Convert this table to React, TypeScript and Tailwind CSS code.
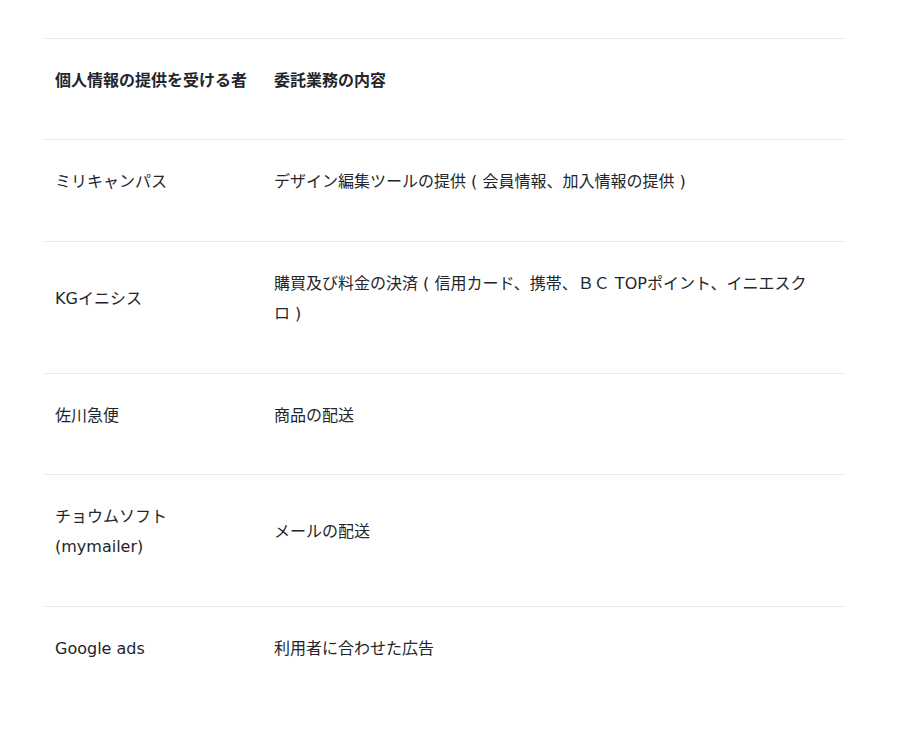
const ROWS: { name: string[]; content: string }[] = [
  { name: ['ミリキャンパス'], content: 'デザイン編集ツールの提供 ( 会員情報、加入情報の提供 )' },
  { name: ['KGイニシス'], content: '購買及び料金の決済 ( 信用カード、携帯、ＢＣ TOPポイント、イニエスクロ )' },
  { name: ['佐川急便'], content: '商品の配送' },
  { name: ['チョウムソフト', '(mymailer)'], content: 'メールの配送' },
  { name: ['Google ads'], content: '利用者に合わせた広告' },
];

export default function App() {
  return (
    <div
      className="min-h-[746px] bg-white pt-[38px] pl-[43px] text-[16px] leading-[1.9] text-[#22262c]"
      style={{ fontFamily: '"DejaVu Sans", "Noto Sans CJK JP", sans-serif' }}
    >
      <table className="w-[803px] table-fixed border-collapse">
        <colgroup>
          <col className="w-[219px]" />
          <col />
        </colgroup>
        <thead>
          <tr className="border-t border-[#ececec]">
            <th className="px-3 py-[27px] text-left align-middle font-bold">
              <p className="mb-4 whitespace-nowrap">個人情報の提供を受ける者</p>
            </th>
            <th className="px-3 py-[27px] text-left align-middle font-bold">
              <p className="mb-4">委託業務の内容</p>
            </th>
          </tr>
        </thead>
        <tbody>
          {ROWS.map((row) => (
            <tr key={row.content} className="border-t border-[#ececec]">
              <td className="px-3 py-[27px] align-middle">
                <p className="mb-4">
                  {row.name.map((line, i) => (
                    <span key={i} className="block">{line}</span>
                  ))}
                </p>
              </td>
              <td className="px-3 py-[27px] align-middle">
                <p className="mb-4 max-w-[545px]">{row.content}</p>
              </td>
            </tr>
          ))}
        </tbody>
      </table>
    </div>
  );
}
